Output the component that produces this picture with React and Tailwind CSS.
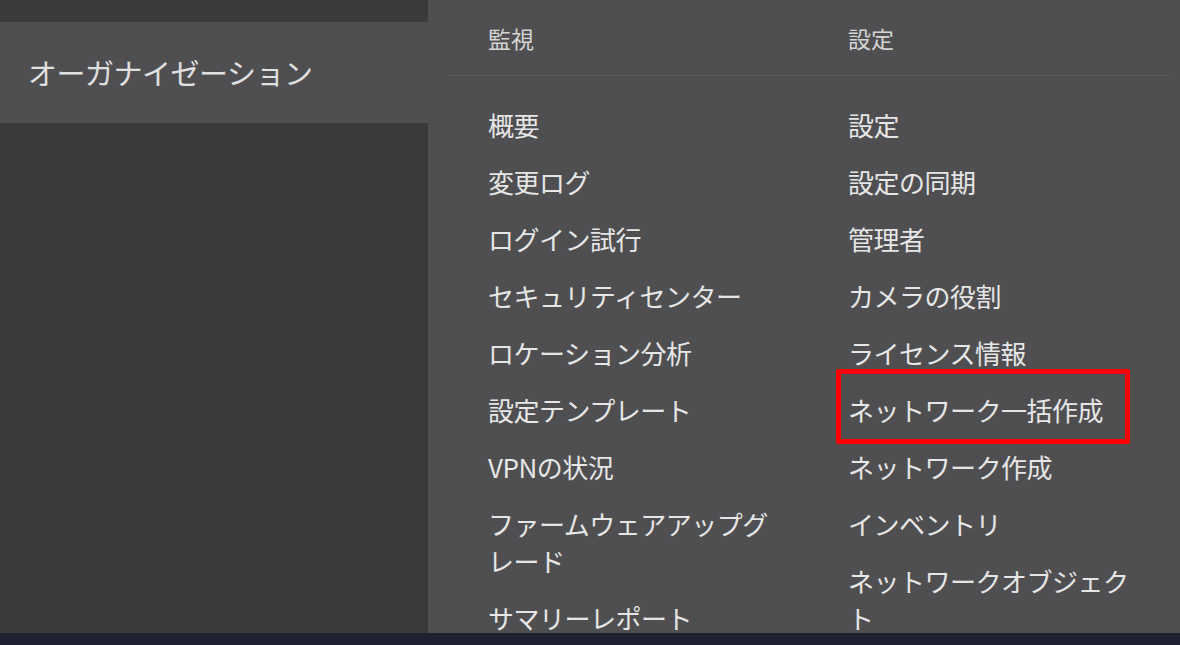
import React from "react";

const monitor = ["概要", "変更ログ", "ログイン試行", "セキュリティセンター", "ロケーション分析", "設定テンプレート", "VPNの状況", "ファームウェアアップグレード", "サマリーレポート"];
const settings = ["設定", "設定の同期", "管理者", "カメラの役割", "ライセンス情報", "ネットワーク一括作成", "ネットワーク作成", "インベントリ", "ネットワークオブジェクト"];

function Column({ title, items }) {
  return (
    <div className="w-[296px] flex flex-col">
      <div className="h-[75px] pt-[22px] text-[23px] leading-[32px] text-[#d4d4d4]">{title}</div>
      <div className="flex flex-col gap-[20px] pt-[31px]">
        {items.map((t) => (
          <div key={t} className="text-[26px] leading-[37px] tracking-[-0.5px] text-[#e6e6e6] relative">
            {t === "ネットワーク一括作成" && (
              <div className="absolute left-[-12px] top-[-22px] w-[294px] h-[75px] border-[5px] border-[#ff0000] rounded-[2px]" />
            )}
            {t}
          </div>
        ))}
      </div>
    </div>
  );
}

export default function App() {
  return (
    <div
      className="w-[1180px] h-[645px] flex flex-col bg-[#1f2130] overflow-hidden"
      style={{ fontFamily: '"Noto Sans CJK JP", "Noto Sans", sans-serif' }}
    >
      <div className="flex h-[633px] overflow-hidden">
        <div className="w-[428px] bg-[#3a3b3d] flex flex-col">
          <div className="h-[22px] bg-[#3a3b3d]" />
          <div className="h-[101px] bg-[#4f4f51] flex items-center pl-[28px] text-[29px] tracking-[-0.5px] text-[#e0e0e0]">
            オーガナイゼーション
          </div>
        </div>
        <div className="flex-1 bg-[#4f4f51] pl-[20px] pr-[10px] relative">
          <div className="absolute left-[20px] right-[10px] top-[75px] h-px bg-[#5c5c5e]" />
          <div className="flex pl-[40px] gap-[64px]">
            <Column title="監視" items={monitor} />
            <Column title="設定" items={settings} />
          </div>
        </div>
      </div>
    </div>
  );
}
